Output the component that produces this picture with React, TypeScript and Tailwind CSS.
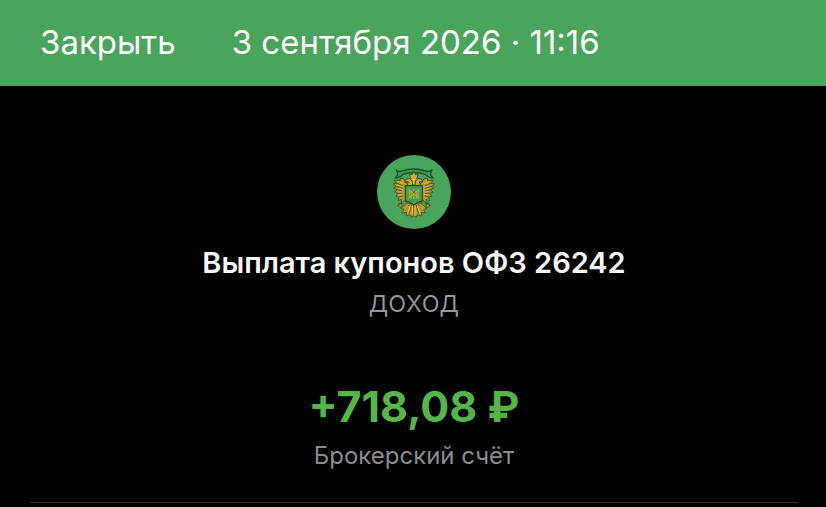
function Emblem() {
  return (
    <svg
      viewBox="21 21 222 222"
      className="size-[74px] rounded-full bg-[#4aa55c]"
      role="img"
      aria-label="Герб"
    >
      {/* ribbon */}
      <g fill="#3f9a50" stroke="#17502b" strokeWidth="4" strokeLinejoin="round">
        <path d="M78 66 Q84 73 96 69 Q131 57 167 69 Q179 73 186 65 Q182 72 182 80 L189 90 Q173 88 166 79 Q131 68 98 79 Q92 88 76 90 L83 80 Q83 72 78 66 Z" />
      </g>

      {/* wings */}
      <g fill="#b99a2b" stroke="#3f4f1c" strokeWidth="2.5" strokeLinejoin="round">
        <path d="M112 108 Q104 101 101 92 L90 91 L91 98 L73 97 L80 106 L70 107 L79 116 L71 120 L82 125 L74 132 L84 136 L78 145 L88 147 L84 158 L95 154 L94 165 L104 157 L108 164 Z" />
        <path d="M151 108 Q159 101 162 92 L173 91 L172 98 L190 97 L183 106 L193 107 L184 116 L192 120 L181 125 L189 132 L179 136 L185 145 L175 147 L179 158 L168 154 L169 165 L159 157 L155 164 Z" />
      </g>
      <g fill="none" stroke="#4f561c" strokeWidth="3">
        <path d="M79 105 L98 113 M80 116 L98 121 M82 125 L97 129 M84 136 L98 136 M88 147 L99 143" />
        <path d="M184 105 L165 113 M183 116 L165 121 M181 125 L166 129 M179 136 L165 136 M175 147 L164 143" />
      </g>
      <g fill="none" stroke="#dcb937" strokeWidth="3">
        <path d="M84 101 L101 107 M84 112 L99 117 M84 121 L99 125 M86 131 L100 132 M88 141 L101 139" />
        <path d="M179 101 L162 107 M179 112 L164 117 M179 121 L164 125 M177 131 L163 132 M175 141 L162 139" />
      </g>

      {/* tail and feet */}
      <path
        d="M110 166 L92 182 L103 184 L96 195 L110 193 L108 204 L121 200 L124 208 L131 204 L139 208 L142 200 L155 204 L153 193 L167 195 L160 184 L171 182 L153 166 Z"
        fill="#b99a2b"
        stroke="#3f4f1c"
        strokeWidth="2.5"
      />
      <path
        d="M131 169 V203 M125 170 L117 197 M138 170 L146 197 M119 169 L104 188 M144 169 L159 188"
        stroke="#4f561c"
        strokeWidth="3"
      />
      <path
        d="M128 174 V200 M135 174 V200 M121 174 L113 196 M142 174 L150 196 M115 174 L102 187 M148 174 L161 187"
        stroke="#eac43c"
        strokeWidth="3"
      />
      <g fill="none" stroke="#2f5a24" strokeWidth="3">
        <path d="M98 167 L88 165 L82 174 M92 170 L92 180 M165 167 L175 165 L181 174 M171 170 L171 180" />
      </g>
      <g fill="#b59728" stroke="#30501e" strokeWidth="2">
        <circle cx="91" cy="173" r="5" />
        <circle cx="173" cy="173" r="5" />
      </g>

      {/* heads and crown */}
      <g fill="#d2ad2e" stroke="#4c4b18" strokeWidth="3" strokeLinejoin="round">
        <path d="M128 112 L126 99 Q120 87 110 93 L104 102 L115 101 L112 113 Z" />
        <path d="M135 112 L137 99 Q143 87 153 93 L159 102 L148 101 L151 113 Z" />
        <path d="M122 92 L119 77 L126 80 L131 73 L137 80 L144 77 L141 92 Z" />
      </g>
      <path d="M124 93 H139 M131 93 V108" stroke="#efcb40" strokeWidth="4" />

      {/* shield */}
      <path
        d="M106 113 H157 V157 Q154 162 145 162 L131 171 L118 162 Q109 162 106 157 Z"
        fill="#45a052"
        stroke="#174d27"
        strokeWidth="3.5"
      />
      <g fill="none" stroke="#c8aa31" strokeWidth="3">
        <path d="M118 125 V151 M124 129 V153 M139 129 V153 M145 125 V151 M118 125 L131 137 L145 125 M115 150 L131 138 L148 150 M131 123 V153" />
      </g>
      <path d="M128 129 L135 136 M135 129 L128 136" stroke="#4b541a" strokeWidth="2" />
    </svg>
  );
}

export default function App() {
  return (
    <div className="min-h-screen bg-black font-['Inter',sans-serif] text-white">
      <header className="flex h-[86px] items-center gap-14 bg-[#4aa55c] px-10 text-[33px]">
        <button type="button">Закрыть</button>
        <time dateTime="2026-09-03T11:16">3 сентября 2026 · 11:16</time>
      </header>

      <main className="pr-7 pl-[30px]">
        <section className="flex flex-col items-center border-b border-[#303030] pt-[69px] pb-[30px] text-center">
          <Emblem />
          <h1 className="mt-4 text-[29px] leading-9 font-semibold text-[#f8f8f8]">
            Выплата купонов ОФЗ 26242
          </h1>
          <p className="text-[31px] leading-10 font-light text-[#98979c]">доход</p>
          <p className="mt-[61px] text-[43px] leading-12 font-bold text-[#55b548]">+718,08 ₽</p>
          <p className="mt-2.5 text-2xl text-[#8d8c91]">Брокерский счёт</p>
        </section>
      </main>
    </div>
  );
}
